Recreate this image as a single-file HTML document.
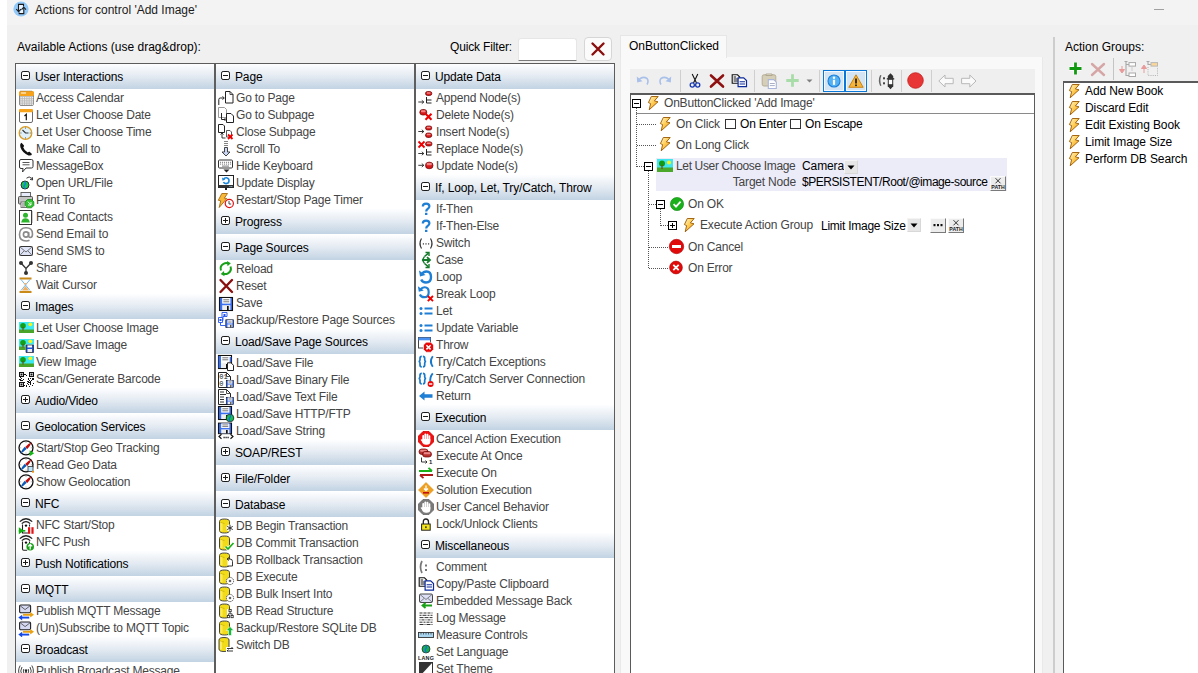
<!DOCTYPE html>
<html><head><meta charset="utf-8"><style>
html,body{margin:0;padding:0}
body{width:1198px;height:673px;overflow:hidden;position:relative;background:#f0f0f0;font-family:"Liberation Sans",sans-serif;font-size:12px;color:#000}
div,svg,span{position:absolute;box-sizing:border-box}
.t{white-space:nowrap;line-height:17px}
.ic{overflow:visible}
#list{left:15px;top:63px;width:600px;height:640px;border:1px solid #5c5c5c;background:#fff}
.colsep{top:64px;width:2px;height:620px;background:#5e5e5e}
.hdr{width:198px;height:25px;background:linear-gradient(#fdfeff 0%,#e6ecf3 45%,#c2d3e3 100%)}
.htxt{white-space:nowrap;line-height:17px;color:#000;letter-spacing:-0.15px}
.itxt{white-space:nowrap;line-height:17px;color:#454545;letter-spacing:-0.2px}
.sep{width:1px;background:#c8c8c8}
</style></head>
<body>

<div style="left:0;top:0;width:7px;height:673px;background:#fff"></div>
<div style="left:7px;top:0;width:1191px;height:25px;background:#f3f3f3"></div>
<svg class="ic" style="left:13px;top:1px" width="16" height="16" viewBox="0 0 16 16"><circle cx="8" cy="8" r="7.6" fill="#92c9f9"/><path d="M5.5 11V3.4h5v2.2M10.8 6.4v6.2H6.2V11.5" fill="#e8f4ff" stroke="#1a1a1a" stroke-width="1.1"/><path d="M3.3 8.2L5.6 10.6L7.9 8.2M8.6 8.6L10.8 6.2L13 8.6" fill="none" stroke="#1a1a1a" stroke-width="1.1"/></svg>
<div class="t" style="left:35px;top:2px;color:#1b1b1b">Actions for control 'Add Image'</div>
<div style="left:1154px;top:9px;width:10px;height:1px;background:#a0a0a0"></div>
<div class="t" style="left:17px;top:39px;color:#000">Available Actions (use drag&amp;drop):</div>
<div class="t" style="left:450px;top:39px;color:#000;letter-spacing:-0.15px">Quick Filter:</div>
<div style="left:518px;top:38px;width:59px;height:23px;background:#fff;border:1px solid #e6e6e6;border-bottom:1px solid #7a7a7a;border-radius:3px 3px 0 0"></div>
<div style="left:584px;top:37px;width:28px;height:24px;background:#fbfbfb;border:1px solid #d6d6d6;border-radius:4px"></div>
<svg class="ic" style="left:590px;top:41px" width="16" height="16" viewBox="0 0 16 16"><path d="M2.5 2.5L13.5 13.5M13.5 2.5L2.5 13.5" stroke="#8b0e0e" stroke-width="2.4" stroke-linecap="round"/></svg>

<div id="list"></div>
<div class="colsep" style="left:214px"></div>
<div class="colsep" style="left:414px"></div>
<div class="hdr" style="left:16px;top:64px"></div>
<svg class="ic" style="left:21px;top:71px" width="9" height="9" viewBox="0 0 9 9"><rect x="0.5" y="0.5" width="8" height="8" rx="1.6" fill="#fff" stroke="#1a1a1a"/><path d="M2 4.5h5" stroke="#1a1a1a"/></svg>
<div class="htxt" style="left:35px;top:69px">User Interactions</div>
<svg class="ic" style="left:18px;top:90px" width="16" height="16" viewBox="0 0 16 16"><rect x="1.5" y="1.5" width="14" height="14" rx="1.5" fill="#bdbdbd" stroke="#8a8a8a"/><rect x="1" y="1" width="15" height="5" rx="1.5" fill="#f7a21b"/><rect x="3" y="2.5" width="5" height="1" fill="#fff"/><rect x="2.5" y="7.0" width="1.2" height="1.2" fill="#f2f2f2"/><rect x="2.5" y="9.2" width="1.2" height="1.2" fill="#f2f2f2"/><rect x="2.5" y="11.4" width="1.2" height="1.2" fill="#f2f2f2"/><rect x="2.5" y="13.6" width="1.2" height="1.2" fill="#f2f2f2"/><rect x="4.8" y="7.0" width="1.2" height="1.2" fill="#f2f2f2"/><rect x="4.8" y="9.2" width="1.2" height="1.2" fill="#f2f2f2"/><rect x="4.8" y="11.4" width="1.2" height="1.2" fill="#f2f2f2"/><rect x="4.8" y="13.6" width="1.2" height="1.2" fill="#f2f2f2"/><rect x="7.1" y="7.0" width="1.2" height="1.2" fill="#f2f2f2"/><rect x="7.1" y="9.2" width="1.2" height="1.2" fill="#f2f2f2"/><rect x="7.1" y="11.4" width="1.2" height="1.2" fill="#f2f2f2"/><rect x="7.1" y="13.6" width="1.2" height="1.2" fill="#f2f2f2"/><rect x="9.4" y="7.0" width="1.2" height="1.2" fill="#f2f2f2"/><rect x="9.4" y="9.2" width="1.2" height="1.2" fill="#f2f2f2"/><rect x="9.4" y="11.4" width="1.2" height="1.2" fill="#f2f2f2"/><rect x="9.4" y="13.6" width="1.2" height="1.2" fill="#f2f2f2"/><rect x="11.7" y="7.0" width="1.2" height="1.2" fill="#f2f2f2"/><rect x="11.7" y="9.2" width="1.2" height="1.2" fill="#f2f2f2"/><rect x="11.7" y="11.4" width="1.2" height="1.2" fill="#f2f2f2"/><rect x="11.7" y="13.6" width="1.2" height="1.2" fill="#f2f2f2"/><rect x="14.0" y="7.0" width="1.2" height="1.2" fill="#f2f2f2"/><rect x="14.0" y="9.2" width="1.2" height="1.2" fill="#f2f2f2"/><rect x="14.0" y="11.4" width="1.2" height="1.2" fill="#f2f2f2"/><rect x="14.0" y="13.6" width="1.2" height="1.2" fill="#f2f2f2"/><path d="M3 0.5v1M5 0.5v1M7 0.5v1M9 0.5v1M11 0.5v1M13 0.5v1" stroke="#666" stroke-width="0.8"/></svg>
<div class="itxt" style="left:36px;top:90px">Access Calendar</div>
<svg class="ic" style="left:18px;top:107px" width="16" height="16" viewBox="0 0 16 16"><rect x="1.5" y="2.5" width="13" height="13" rx="1.5" fill="#fff" stroke="#6a6a6a"/><rect x="1" y="2" width="14" height="3.3" rx="1.2" fill="#f7a21b"/><path d="M6.5 9L8.3 7.4V13.2" fill="none" stroke="#111" stroke-width="1.2"/></svg>
<div class="itxt" style="left:36px;top:107px">Let User Choose Date</div>
<svg class="ic" style="left:18px;top:124px" width="16" height="16" viewBox="0 0 16 16"><circle cx="7.5" cy="9" r="6.3" fill="#def1fb" stroke="#d99a20" stroke-width="1.3"/><path d="M4.5 6L7.5 9H10.5" fill="none" stroke="#333" stroke-width="1.1"/><path d="M7.5 3.5v1.2M7.5 13.3v1.2M2.3 9h1.2M11.7 9h1.2" stroke="#555" stroke-width="0.8"/></svg>
<div class="itxt" style="left:36px;top:124px">Let User Choose Time</div>
<svg class="ic" style="left:18px;top:141px" width="16" height="16" viewBox="0 0 16 16"><path d="M3.5 1.8 Q1.5 3 2.5 6.5 Q4.5 12 10.5 14.5 Q13.5 15 14 13 L11.5 10.8 Q10.5 10.5 9.8 11.5 Q6.5 10 5.2 6.2 Q6.2 5.5 6 4.5 Z" fill="#111"/></svg>
<div class="itxt" style="left:36px;top:141px">Make Call to</div>
<svg class="ic" style="left:18px;top:158px" width="16" height="16" viewBox="0 0 16 16"><path d="M3 1.5h10.5q1.5 0 1.5 1.5v5.5q0 1.5-1.5 1.5H8L4.5 14l0.6-3.5H3q-1.5 0-1.5-1.5V3q0-1.5 1.5-1.5Z" fill="#fff" stroke="#333" stroke-width="1"/><path d="M4.5 4.5h7M4.5 6.8h7" stroke="#444" stroke-width="0.9"/></svg>
<div class="itxt" style="left:36px;top:158px">MessageBox</div>
<svg class="ic" style="left:18px;top:175px" width="16" height="16" viewBox="0 0 16 16"><circle cx="7" cy="10" r="4" fill="#18c850" stroke="#222" stroke-width="0.9"/><path d="M6.5 6.8 Q8.5 8.5 6.5 10 Q5 11.5 7.5 13.5" fill="none" stroke="#1a7ee0" stroke-width="1.6"/><path d="M8.5 3.2 Q11 0.5 14 3.5" fill="none" stroke="#222" stroke-width="0.9"/><path d="M12 4.3L14.6 5L14.4 2.2" fill="none" stroke="#222" stroke-width="0.9"/></svg>
<div class="itxt" style="left:36px;top:175px">Open URL/File</div>
<svg class="ic" style="left:18px;top:192px" width="16" height="16" viewBox="0 0 16 16"><rect x="3" y="0.5" width="9.5" height="5" fill="#e6ecfa" stroke="#555" stroke-width="0.9"/><rect x="0.5" y="4.5" width="14" height="7.5" rx="1" fill="#c4c4c4" stroke="#444" stroke-width="0.9"/><rect x="3" y="10" width="6" height="5.5" fill="#fff" stroke="#555" stroke-width="0.8"/><path d="M4 12h3M4 14h3" stroke="#444" stroke-width="0.8"/><path d="M9.5 7.5h4l2.3 2.3v3.7l-2.3 2.3h-4l-2.3-2.3V9.8Z" fill="#30c030" stroke="#168a16" stroke-width="0.8"/><path d="M9.8 9.5L13 13M10 13h3V10" fill="none" stroke="#fff" stroke-width="0.9"/></svg>
<div class="itxt" style="left:36px;top:192px">Print To</div>
<svg class="ic" style="left:18px;top:209px" width="16" height="16" viewBox="0 0 16 16"><rect x="1.5" y="1.5" width="12" height="14" fill="#fff" stroke="#333" stroke-width="1"/><path d="M14 2.5v12" stroke="#555" stroke-width="1.2" stroke-dasharray="1 1"/><circle cx="7.5" cy="6.3" r="2.5" fill="#2eb52e"/><path d="M3.2 13.5 Q3.8 9.2 7.5 9.2 Q11.2 9.2 11.8 13.5Z" fill="#2eb52e"/></svg>
<div class="itxt" style="left:36px;top:209px">Read Contacts</div>
<svg class="ic" style="left:18px;top:226px" width="16" height="16" viewBox="0 0 16 16"><circle cx="8" cy="8.5" r="2.6" fill="none" stroke="#8a8a8a" stroke-width="1.6"/><path d="M10.6 6v3.5q0 2 1.7 2 2.2 0 2.2-3.5 0-6.2-6.5-6.2T1.5 8.5q0 6.5 6.7 6.5 2 0 3.3-0.7" fill="none" stroke="#8a8a8a" stroke-width="1.6"/></svg>
<div class="itxt" style="left:36px;top:226px">Send Email to</div>
<svg class="ic" style="left:18px;top:243px" width="16" height="16" viewBox="0 0 16 16"><rect x="1.5" y="3.5" width="13" height="9" rx="1" fill="#dfe4f7" stroke="#333"/><path d="M2 4L8 9L14 4M2 12.2L6 8M14 12.2L10 8" fill="none" stroke="#555" stroke-width="0.8"/></svg>
<div class="itxt" style="left:36px;top:243px">Send SMS to</div>
<svg class="ic" style="left:18px;top:260px" width="16" height="16" viewBox="0 0 16 16"><circle cx="3" cy="3" r="2" fill="#333"/><circle cx="13" cy="3" r="2" fill="#333"/><circle cx="8" cy="13" r="2" fill="#333"/><path d="M3 3L8 8.5L13 3M8 8.5V13" fill="none" stroke="#333" stroke-width="1.3"/></svg>
<div class="itxt" style="left:36px;top:260px">Share</div>
<svg class="ic" style="left:18px;top:277px" width="16" height="16" viewBox="0 0 16 16"><rect x="1.5" y="0.5" width="12" height="2" fill="#c98a1a"/><rect x="1.5" y="14" width="12" height="2" fill="#c98a1a"/><path d="M3 2.5L12 13.5M12 2.5L3 13.5" stroke="#4aa8ea" stroke-width="0.8"/><path d="M5.5 5.5Q7.5 7 9.5 5.5L7.5 8.2Z M7.5 9L11 13.5H4Z" fill="#f0b060"/></svg>
<div class="itxt" style="left:36px;top:277px">Wait Cursor</div>
<div class="hdr" style="left:16px;top:294px"></div>
<svg class="ic" style="left:21px;top:301px" width="9" height="9" viewBox="0 0 9 9"><rect x="0.5" y="0.5" width="8" height="8" rx="1.6" fill="#fff" stroke="#1a1a1a"/><path d="M2 4.5h5" stroke="#1a1a1a"/></svg>
<div class="htxt" style="left:35px;top:299px">Images</div>
<svg class="ic" style="left:18px;top:320px" width="16" height="16" viewBox="0 0 16 16"><rect x="1" y="2" width="15" height="11" fill="#3ce8f2"/><rect x="1" y="9.5" width="15" height="3.5" fill="#49a52a"/><circle cx="5" cy="5.8" r="2.8" fill="#14a014"/><rect x="4.5" y="7" width="1" height="3.5" fill="#6a4010"/><circle cx="12.3" cy="4.3" r="1.9" fill="#f5f51a"/></svg>
<div class="itxt" style="left:36px;top:320px">Let User Choose Image</div>
<svg class="ic" style="left:18px;top:337px" width="16" height="16" viewBox="0 0 16 16"><rect x="1" y="2" width="15" height="11" fill="#3ce8f2"/><rect x="1" y="9.5" width="15" height="3.5" fill="#49a52a"/><circle cx="5" cy="5.8" r="2.8" fill="#14a014"/><rect x="4.5" y="7" width="1" height="3.5" fill="#6a4010"/><circle cx="12.3" cy="4.3" r="1.9" fill="#f5f51a"/><rect x="7.5" y="7.5" width="8" height="8.5" fill="#fff"/><rect x="8" y="8" width="7.5" height="7.5" fill="#1d4fd8"/><rect x="9.5" y="8" width="4.5" height="2.5" fill="#fff"/><rect x="9.5" y="12" width="4.5" height="3.5" fill="#eee"/><path d="M8 8h7.5v7.5H8z" fill="none" stroke="#222" stroke-width="0.7"/></svg>
<div class="itxt" style="left:36px;top:337px">Load/Save Image</div>
<svg class="ic" style="left:18px;top:354px" width="16" height="16" viewBox="0 0 16 16"><rect x="1" y="2" width="15" height="11" fill="#3ce8f2"/><rect x="1" y="9.5" width="15" height="3.5" fill="#49a52a"/><circle cx="5" cy="5.8" r="2.8" fill="#14a014"/><rect x="4.5" y="7" width="1" height="3.5" fill="#6a4010"/><circle cx="12.3" cy="4.3" r="1.9" fill="#f5f51a"/></svg>
<div class="itxt" style="left:36px;top:354px">View Image</div>
<svg class="ic" style="left:18px;top:371px" width="16" height="16" viewBox="0 0 16 16"><rect x="1" y="1" width="15" height="15" fill="#fff"/><rect x="1.5" y="1.5" width="4" height="4" fill="none" stroke="#111"/><rect x="2.5" y="2.5" width="2" height="2" fill="#111"/><rect x="11.5" y="1.5" width="4" height="4" fill="none" stroke="#111"/><rect x="12.5" y="2.5" width="2" height="2" fill="#111"/><rect x="1.5" y="11.5" width="4" height="4" fill="none" stroke="#111"/><rect x="2.5" y="12.5" width="2" height="2" fill="#111"/><rect x="9" y="10" width="1" height="1" fill="#111"/><rect x="11" y="15" width="1" height="1" fill="#111"/><rect x="15" y="8" width="1" height="1" fill="#111"/><rect x="9" y="12" width="1" height="1" fill="#111"/><rect x="13" y="9" width="1" height="1" fill="#111"/><rect x="14" y="8" width="1" height="1" fill="#111"/><rect x="12" y="11" width="1" height="1" fill="#111"/><rect x="8" y="4" width="1" height="1" fill="#111"/><rect x="8" y="14" width="1" height="1" fill="#111"/><rect x="14" y="7" width="1" height="1" fill="#111"/><rect x="6" y="11" width="1" height="1" fill="#111"/><rect x="7" y="3" width="1" height="1" fill="#111"/><rect x="10" y="13" width="1" height="1" fill="#111"/><rect x="6" y="14" width="1" height="1" fill="#111"/><rect x="10" y="8" width="1" height="1" fill="#111"/><rect x="15" y="12" width="1" height="1" fill="#111"/><rect x="12" y="12" width="1" height="1" fill="#111"/><rect x="12" y="7" width="1" height="1" fill="#111"/><rect x="15" y="8" width="1" height="1" fill="#111"/><rect x="8" y="15" width="1" height="1" fill="#111"/><rect x="6" y="3" width="1" height="1" fill="#111"/><rect x="10" y="11" width="1" height="1" fill="#111"/><rect x="12" y="13" width="1" height="1" fill="#111"/><rect x="10" y="7" width="1" height="1" fill="#111"/><rect x="14" y="14" width="1" height="1" fill="#111"/><rect x="12" y="10" width="1" height="1" fill="#111"/><rect x="11" y="9" width="1" height="1" fill="#111"/><rect x="15" y="7" width="1" height="1" fill="#111"/><rect x="11" y="11" width="1" height="1" fill="#111"/><rect x="6" y="14" width="1" height="1" fill="#111"/><rect x="10" y="10" width="1" height="1" fill="#111"/><rect x="2" y="6" width="1" height="1" fill="#111"/><rect x="3" y="7" width="1" height="1" fill="#111"/><rect x="1" y="8" width="1" height="1" fill="#111"/><rect x="2" y="8" width="1" height="1" fill="#111"/><rect x="5" y="8" width="1" height="1" fill="#111"/><rect x="2" y="9" width="1" height="1" fill="#111"/><rect x="3" y="9" width="1" height="1" fill="#111"/><rect x="4" y="9" width="1" height="1" fill="#111"/></svg>
<div class="itxt" style="left:36px;top:371px">Scan/Generate Barcode</div>
<div class="hdr" style="left:16px;top:388px"></div>
<svg class="ic" style="left:21px;top:395px" width="9" height="9" viewBox="0 0 9 9"><rect x="0.5" y="0.5" width="8" height="8" rx="1.6" fill="#fff" stroke="#1a1a1a"/><path d="M2 4.5h5M4.5 2v5" stroke="#1a1a1a"/></svg>
<div class="htxt" style="left:35px;top:393px">Audio/Video</div>
<div class="hdr" style="left:16px;top:414px"></div>
<svg class="ic" style="left:21px;top:421px" width="9" height="9" viewBox="0 0 9 9"><rect x="0.5" y="0.5" width="8" height="8" rx="1.6" fill="#fff" stroke="#1a1a1a"/><path d="M2 4.5h5" stroke="#1a1a1a"/></svg>
<div class="htxt" style="left:35px;top:419px">Geolocation Services</div>
<svg class="ic" style="left:18px;top:440px" width="16" height="16" viewBox="0 0 16 16"><circle cx="8" cy="7.8" r="7" fill="#fff" stroke="#111" stroke-width="1.3"/><path d="M8 2v1M8 12.6v1M2.2 7.8h1M12.8 7.8h1" stroke="#888" stroke-width="0.7"/><path d="M13.6 2.2Q12.5 5.5 9.3 8.9L7.2 6.9Q10.5 3.5 13.6 2.2Z" fill="#c00d0d"/><path d="M2.4 13.4Q3.5 10.1 6.7 6.7L8.8 8.7Q5.5 12.1 2.4 13.4Z" fill="#0d5bb8"/><path d="M11.6 10.2v6l4.5-3z" fill="#14b414"/></svg>
<div class="itxt" style="left:36px;top:440px">Start/Stop Geo Tracking</div>
<svg class="ic" style="left:18px;top:457px" width="16" height="16" viewBox="0 0 16 16"><circle cx="8" cy="7.8" r="7" fill="#fff" stroke="#111" stroke-width="1.3"/><path d="M8 2v1M8 12.6v1M2.2 7.8h1M12.8 7.8h1" stroke="#888" stroke-width="0.7"/><path d="M13.6 2.2Q12.5 5.5 9.3 8.9L7.2 6.9Q10.5 3.5 13.6 2.2Z" fill="#c00d0d"/><path d="M2.4 13.4Q3.5 10.1 6.7 6.7L8.8 8.7Q5.5 12.1 2.4 13.4Z" fill="#0d5bb8"/><rect x="10" y="9.5" width="5" height="5" fill="#bfe6ff" stroke="#333" stroke-width="0.8"/><circle cx="15" cy="14.8" r="1.1" fill="#f09010"/></svg>
<div class="itxt" style="left:36px;top:457px">Read Geo Data</div>
<svg class="ic" style="left:18px;top:474px" width="16" height="16" viewBox="0 0 16 16"><circle cx="8" cy="7.8" r="7" fill="#fff" stroke="#111" stroke-width="1.3"/><path d="M8 2v1M8 12.6v1M2.2 7.8h1M12.8 7.8h1" stroke="#888" stroke-width="0.7"/><path d="M13.6 2.2Q12.5 5.5 9.3 8.9L7.2 6.9Q10.5 3.5 13.6 2.2Z" fill="#c00d0d"/><path d="M2.4 13.4Q3.5 10.1 6.7 6.7L8.8 8.7Q5.5 12.1 2.4 13.4Z" fill="#0d5bb8"/></svg>
<div class="itxt" style="left:36px;top:474px">Show Geolocation</div>
<div class="hdr" style="left:16px;top:491px"></div>
<svg class="ic" style="left:21px;top:498px" width="9" height="9" viewBox="0 0 9 9"><rect x="0.5" y="0.5" width="8" height="8" rx="1.6" fill="#fff" stroke="#1a1a1a"/><path d="M2 4.5h5" stroke="#1a1a1a"/></svg>
<div class="htxt" style="left:35px;top:496px">NFC</div>
<svg class="ic" style="left:18px;top:517px" width="16" height="16" viewBox="0 0 16 16"><path d="M1.8 4.6Q8 -1.2 14.2 4.6M3.8 6.6Q8 2.6 12.2 6.6" fill="none" stroke="#222" stroke-width="1.3"/><circle cx="8" cy="8.6" r="1.2" fill="#111"/><path d="M4.5 7.5v8.5h5.5M11.5 7.5v2" fill="none" stroke="#222" stroke-width="1.1"/><path d="M0.8 10.2v7l5.2-3.5z" fill="#12b012"/><rect x="0.8" y="13" width="6.5" height="1.6" fill="#12b012"/><rect x="10" y="10.2" width="2.2" height="6.6" fill="#e41414"/><rect x="13.4" y="10.2" width="2.2" height="6.6" fill="#e41414"/></svg>
<div class="itxt" style="left:36px;top:517px">NFC Start/Stop</div>
<svg class="ic" style="left:18px;top:534px" width="16" height="16" viewBox="0 0 16 16"><path d="M1.8 4.6Q8 -1.2 14.2 4.6M3.8 6.6Q8 2.6 12.2 6.6" fill="none" stroke="#222" stroke-width="1.3"/><circle cx="8" cy="8.6" r="1.2" fill="#111"/><path d="M4.5 7.5v7.5q0 1.2 1.2 1.2h3.5M11.5 7.5v2" fill="none" stroke="#222" stroke-width="1.1"/><circle cx="12.2" cy="12.8" r="3.8" fill="#18a018"/><path d="M12.2 15.6V10.4M10.2 12.4L12.2 10.4L14.2 12.4" fill="none" stroke="#fff" stroke-width="1.3"/></svg>
<div class="itxt" style="left:36px;top:534px">NFC Push</div>
<div class="hdr" style="left:16px;top:551px"></div>
<svg class="ic" style="left:21px;top:558px" width="9" height="9" viewBox="0 0 9 9"><rect x="0.5" y="0.5" width="8" height="8" rx="1.6" fill="#fff" stroke="#1a1a1a"/><path d="M2 4.5h5M4.5 2v5" stroke="#1a1a1a"/></svg>
<div class="htxt" style="left:35px;top:556px">Push Notifications</div>
<div class="hdr" style="left:16px;top:577px"></div>
<svg class="ic" style="left:21px;top:584px" width="9" height="9" viewBox="0 0 9 9"><rect x="0.5" y="0.5" width="8" height="8" rx="1.6" fill="#fff" stroke="#1a1a1a"/><path d="M2 4.5h5" stroke="#1a1a1a"/></svg>
<div class="htxt" style="left:35px;top:582px">MQTT</div>
<svg class="ic" style="left:18px;top:603px" width="16" height="16" viewBox="0 0 16 16"><rect x="1.6" y="2" width="11" height="7.8" rx="1.2" fill="#d5d9f2" stroke="#222" stroke-width="1.1"/><path d="M2.2 2.8L7.1 6.6L12 2.8" fill="none" stroke="#444" stroke-width="0.8"/><path d="M5 11.8h8.5" stroke="#e8a010" stroke-width="1.9"/><path d="M12.2 9L16 11.8L12.2 14.6Z" fill="#e8a010"/><path d="M11.2 14.6H3.5" stroke="#1448e8" stroke-width="1.9"/><path d="M4.2 11.8L0.3 14.6L4.2 17.4Z" fill="#1448e8"/></svg>
<div class="itxt" style="left:36px;top:603px">Publish MQTT Message</div>
<svg class="ic" style="left:18px;top:620px" width="16" height="16" viewBox="0 0 16 16"><rect x="1.6" y="2" width="11" height="7.8" rx="1.2" fill="#d5d9f2" stroke="#222" stroke-width="1.1"/><path d="M2.2 2.8L7.1 6.6L12 2.8" fill="none" stroke="#444" stroke-width="0.8"/><path d="M5 11.8h8.5" stroke="#e8a010" stroke-width="1.9"/><path d="M12.2 9L16 11.8L12.2 14.6Z" fill="#e8a010"/><path d="M11.2 14.6H3.5" stroke="#1448e8" stroke-width="1.9"/><path d="M4.2 11.8L0.3 14.6L4.2 17.4Z" fill="#1448e8"/></svg>
<div class="itxt" style="left:36px;top:620px">(Un)Subscribe to MQTT Topic</div>
<div class="hdr" style="left:16px;top:637px"></div>
<svg class="ic" style="left:21px;top:644px" width="9" height="9" viewBox="0 0 9 9"><rect x="0.5" y="0.5" width="8" height="8" rx="1.6" fill="#fff" stroke="#1a1a1a"/><path d="M2 4.5h5" stroke="#1a1a1a"/></svg>
<div class="htxt" style="left:35px;top:642px">Broadcast</div>
<svg class="ic" style="left:18px;top:663px" width="16" height="16" viewBox="0 0 16 16"><path d="M4 4 Q1.5 8 4 12M12 4 Q14.5 8 12 12M2.2 2.5 Q-1 8 2.2 13.5M13.8 2.5 Q17 8 13.8 13.5M5.8 6 Q4.8 8 5.8 10M10.2 6 Q11.2 8 10.2 10" fill="none" stroke="#333" stroke-width="0.9"/><circle cx="8" cy="7.5" r="1.2" fill="#222"/><path d="M8 8v6M6.5 14h3" stroke="#222" stroke-width="1.3"/></svg>
<div class="itxt" style="left:36px;top:663px">Publish Broadcast Message</div>
<div class="hdr" style="left:216px;top:64px"></div>
<svg class="ic" style="left:221px;top:71px" width="9" height="9" viewBox="0 0 9 9"><rect x="0.5" y="0.5" width="8" height="8" rx="1.6" fill="#fff" stroke="#1a1a1a"/><path d="M2 4.5h5" stroke="#1a1a1a"/></svg>
<div class="htxt" style="left:235px;top:69px">Page</div>
<svg class="ic" style="left:218px;top:90px" width="16" height="16" viewBox="0 0 16 16"><path d="M7.5 1.5h4.5l3 3v8.5h-7.5z" fill="#fff" stroke="#222" stroke-width="1"/><path d="M12 1.5v3h3" fill="none" stroke="#222" stroke-width="0.8"/><path d="M0.8 15V9.5q0-1.5 1.5-1.5H5" fill="none" stroke="#222" stroke-width="1"/><path d="M4.5 6.5L6.3 8L4.5 9.5" fill="none" stroke="#222" stroke-width="1"/></svg>
<div class="itxt" style="left:236px;top:90px">Go to Page</div>
<svg class="ic" style="left:218px;top:107px" width="16" height="16" viewBox="0 0 16 16"><path d="M0.5 0.5h6l2 2v8h-8z" fill="#fff" stroke="#9a9a9a" stroke-width="1"/><path d="M8.5 6.5h4.5l2.5 2.5v6.5h-7z" fill="#fff" stroke="#222" stroke-width="1"/><path d="M3.5 6v6.5h4" fill="none" stroke="#222" stroke-width="1"/><path d="M6.5 11L8 12.5L6.5 14" fill="none" stroke="#222" stroke-width="0.9"/></svg>
<div class="itxt" style="left:236px;top:107px">Go to Subpage</div>
<svg class="ic" style="left:218px;top:124px" width="16" height="16" viewBox="0 0 16 16"><path d="M0.5 0.5h4.5l1.5 1.5v6.5h-6z" fill="#fff" stroke="#222" stroke-width="1"/><path d="M8.5 6.5h3.5l1.5 1.5v5h-5z" fill="#fff" stroke="#444" stroke-width="0.9"/><path d="M4 9v5h3.5M2.5 10.5L4 9L5.5 10.5" fill="none" stroke="#222" stroke-width="0.9"/><path d="M10 10.5L14.5 15M14.5 10.5L10 15" stroke="#e00" stroke-width="1.8"/></svg>
<div class="itxt" style="left:236px;top:124px">Close Subpage</div>
<svg class="ic" style="left:218px;top:141px" width="16" height="16" viewBox="0 0 16 16"><path d="M6 0.5h4M6 2.5h4M6 4.5h4" stroke="#666" stroke-width="0.8"/><path d="M6.5 6.5h3v4.5h2.5L8 15L4 11h2.5z" fill="#c9d6f5" stroke="#333" stroke-width="0.9"/></svg>
<div class="itxt" style="left:236px;top:141px">Scroll To</div>
<svg class="ic" style="left:218px;top:158px" width="16" height="16" viewBox="0 0 16 16"><rect x="0.5" y="2" width="14" height="8" rx="1" fill="#fff" stroke="#333" stroke-width="1"/><rect x="2" y="3.8" width="1.1" height="1" fill="#777"/><rect x="2" y="5.6" width="1.1" height="1" fill="#777"/><rect x="4" y="3.8" width="1.1" height="1" fill="#777"/><rect x="4" y="5.6" width="1.1" height="1" fill="#777"/><rect x="6" y="3.8" width="1.1" height="1" fill="#777"/><rect x="6" y="5.6" width="1.1" height="1" fill="#777"/><rect x="8" y="3.8" width="1.1" height="1" fill="#777"/><rect x="8" y="5.6" width="1.1" height="1" fill="#777"/><rect x="10" y="3.8" width="1.1" height="1" fill="#777"/><rect x="10" y="5.6" width="1.1" height="1" fill="#777"/><rect x="12" y="3.8" width="1.1" height="1" fill="#777"/><rect x="12" y="5.6" width="1.1" height="1" fill="#777"/><rect x="4" y="7.6" width="7" height="1" fill="#777"/><path d="M5.5 11.5h6L8.5 14.5Z" fill="#222"/></svg>
<div class="itxt" style="left:236px;top:158px">Hide Keyboard</div>
<svg class="ic" style="left:218px;top:175px" width="16" height="16" viewBox="0 0 16 16"><rect x="0.5" y="0.5" width="15" height="12" fill="#fff" stroke="#222" stroke-width="1"/><rect x="0.5" y="10" width="15" height="2.8" fill="#333"/><rect x="11.5" y="11" width="1" height="1" fill="#9cd"/><rect x="13.3" y="11" width="1" height="1" fill="#9cd"/><rect x="7" y="12.5" width="2" height="2.5" fill="#222"/><path d="M5.5 4.5 Q6.5 2.5 8.5 2.7 Q11 3 11 5.8 Q11 8.5 8 8.6 Q6 8.6 5.5 7" fill="none" stroke="#1d86d8" stroke-width="1.6"/><path d="M4 2.5L4.5 5.8L7.3 4.6Z" fill="#1d86d8"/></svg>
<div class="itxt" style="left:236px;top:175px">Update Display</div>
<svg class="ic" style="left:218px;top:192px" width="16" height="16" viewBox="0 0 16 16"><g transform="translate(0,1)"><path d="M3.8 0.5L9.5 0.5L6.3 5.2L8.8 5.5L1.2 14.5L2.7 7.8L0.3 7.3Z" fill="#f8b93a" stroke="#9a5a00" stroke-width="0.8" stroke-linejoin="round"/></g><circle cx="11.3" cy="11.5" r="4.1" fill="#fff" stroke="#e01010" stroke-width="1.2"/><path d="M11 9v3h2.2" fill="none" stroke="#333" stroke-width="0.9"/></svg>
<div class="itxt" style="left:236px;top:192px">Restart/Stop Page Timer</div>
<div class="hdr" style="left:216px;top:209px"></div>
<svg class="ic" style="left:221px;top:216px" width="9" height="9" viewBox="0 0 9 9"><rect x="0.5" y="0.5" width="8" height="8" rx="1.6" fill="#fff" stroke="#1a1a1a"/><path d="M2 4.5h5M4.5 2v5" stroke="#1a1a1a"/></svg>
<div class="htxt" style="left:235px;top:214px">Progress</div>
<div class="hdr" style="left:216px;top:235px"></div>
<svg class="ic" style="left:221px;top:242px" width="9" height="9" viewBox="0 0 9 9"><rect x="0.5" y="0.5" width="8" height="8" rx="1.6" fill="#fff" stroke="#1a1a1a"/><path d="M2 4.5h5" stroke="#1a1a1a"/></svg>
<div class="htxt" style="left:235px;top:240px">Page Sources</div>
<svg class="ic" style="left:218px;top:261px" width="16" height="16" viewBox="0 0 16 16"><path d="M3 9.5 Q1.5 5 5.5 2.8 Q8 1.5 10.5 2.5" fill="none" stroke="#18a018" stroke-width="2"/><path d="M9 0L12.8 2.2L9.5 5.2Z" fill="#18a018"/><path d="M12.5 5.5 Q14 10 10 12.3 Q7.5 13.7 5 12.7" fill="none" stroke="#18a018" stroke-width="2"/><path d="M6.5 15.2L2.7 13L6 10Z" fill="#18a018"/></svg>
<div class="itxt" style="left:236px;top:261px">Reload</div>
<svg class="ic" style="left:218px;top:278px" width="16" height="16" viewBox="0 0 16 16"><path d="M2.5 2L14 14M14 2L2.5 14" stroke="#8a1010" stroke-width="2.4" stroke-linecap="round"/></svg>
<div class="itxt" style="left:236px;top:278px">Reset</div>
<svg class="ic" style="left:218px;top:295px" width="16" height="16" viewBox="0 0 16 16"><rect x="1.5" y="2.5" width="13" height="13" fill="#3a6ff0" stroke="#111" stroke-width="1.1"/><rect x="4.2" y="3" width="8.2" height="5.6" fill="#fff"/><path d="M5.3 4.8h6M5.3 6.8h6" stroke="#666" stroke-width="0.9"/><rect x="4.2" y="10.2" width="8.2" height="4.8" fill="#eeeeee"/><rect x="9" y="11" width="1.7" height="4.2" fill="#111"/></svg>
<div class="itxt" style="left:236px;top:295px">Save</div>
<svg class="ic" style="left:218px;top:312px" width="16" height="16" viewBox="0 0 16 16"><path d="M4 0.5h5v4h-4v4h-3v-3h2z" fill="#fff" stroke="#2255ee" stroke-width="0.9"/><rect x="5.5" y="2" width="2" height="2" fill="#2255ee"/><path d="M0.5 5.5h4v5h-4zM2.5 10.5v3h5" fill="#fff" stroke="#2255ee" stroke-width="0.9"/><rect x="1.5" y="7" width="2" height="2" fill="#2255ee"/><g transform="translate(7.5,7.5) scale(0.6) translate(-1,-2)"><rect x="1.5" y="2.5" width="13" height="13" fill="#3a6ff0" stroke="#111" stroke-width="1.1"/><rect x="4.2" y="3" width="8.2" height="5.6" fill="#fff"/><path d="M5.3 4.8h6M5.3 6.8h6" stroke="#666" stroke-width="0.9"/><rect x="4.2" y="10.2" width="8.2" height="4.8" fill="#eeeeee"/><rect x="9" y="11" width="1.7" height="4.2" fill="#111"/></g></svg>
<div class="itxt" style="left:236px;top:312px">Backup/Restore Page Sources</div>
<div class="hdr" style="left:216px;top:329px"></div>
<svg class="ic" style="left:221px;top:336px" width="9" height="9" viewBox="0 0 9 9"><rect x="0.5" y="0.5" width="8" height="8" rx="1.6" fill="#fff" stroke="#1a1a1a"/><path d="M2 4.5h5" stroke="#1a1a1a"/></svg>
<div class="htxt" style="left:235px;top:334px">Load/Save Page Sources</div>
<svg class="ic" style="left:218px;top:355px" width="16" height="16" viewBox="0 0 16 16"><g transform="translate(-1,-2)"><rect x="1.5" y="2.5" width="13" height="13" fill="#fff" stroke="#111" stroke-width="1.1"/><rect x="1.6" y="3" width="2.4" height="12" fill="#3a6ff0"/><rect x="12.5" y="4" width="1.8" height="5" fill="#3a6ff0"/><rect x="4.2" y="3" width="8.2" height="5.6" fill="#fff"/><path d="M5.3 4.8h6M5.3 6.8h6" stroke="#666" stroke-width="0.9"/><rect x="4.2" y="10.2" width="8.2" height="4.8" fill="#eeeeee"/><rect x="9" y="11" width="1.7" height="4.2" fill="#111"/></g><path d="M9.5 7.8h3.5l2.5 2.5v5.2h-6z" fill="#fff" stroke="#222" stroke-width="1"/></svg>
<div class="itxt" style="left:236px;top:355px">Load/Save File</div>
<svg class="ic" style="left:218px;top:372px" width="16" height="16" viewBox="0 0 16 16"><path d="M0.5 0.5h8l4 4v11h-12z" fill="#fff" stroke="#222" stroke-width="1"/><path d="M8.5 0.5v4h4" fill="none" stroke="#222" stroke-width="0.8"/><text x="1.2" y="7" font-size="7" font-family="Liberation Mono" fill="#222">01</text><text x="1.2" y="14" font-size="7" font-family="Liberation Mono" fill="#222">0</text><g transform="translate(8,8) scale(0.55) translate(-1,-2)"><rect x="1.5" y="2.5" width="13" height="13" fill="#3a6ff0" stroke="#111" stroke-width="1.1"/><rect x="4.2" y="3" width="8.2" height="5.6" fill="#fff"/><path d="M5.3 4.8h6M5.3 6.8h6" stroke="#666" stroke-width="0.9"/><rect x="4.2" y="10.2" width="8.2" height="4.8" fill="#eeeeee"/><rect x="9" y="11" width="1.7" height="4.2" fill="#111"/></g></svg>
<div class="itxt" style="left:236px;top:372px">Load/Save Binary File</div>
<svg class="ic" style="left:218px;top:389px" width="16" height="16" viewBox="0 0 16 16"><path d="M0.5 0.5h8l4 4v11h-12z" fill="#fff" stroke="#222" stroke-width="1"/><path d="M8.5 0.5v4h4" fill="none" stroke="#222" stroke-width="0.8"/><path d="M2 3h4M2 5.5h6M2 8h4M2 10.5h4M2 13h4" stroke="#333" stroke-width="1"/><g transform="translate(8,8) scale(0.55) translate(-1,-2)"><rect x="1.5" y="2.5" width="13" height="13" fill="#3a6ff0" stroke="#111" stroke-width="1.1"/><rect x="4.2" y="3" width="8.2" height="5.6" fill="#fff"/><path d="M5.3 4.8h6M5.3 6.8h6" stroke="#666" stroke-width="0.9"/><rect x="4.2" y="10.2" width="8.2" height="4.8" fill="#eeeeee"/><rect x="9" y="11" width="1.7" height="4.2" fill="#111"/></g></svg>
<div class="itxt" style="left:236px;top:389px">Load/Save Text File</div>
<svg class="ic" style="left:218px;top:406px" width="16" height="16" viewBox="0 0 16 16"><g transform="translate(-1,-2)"><rect x="1.5" y="2.5" width="13" height="13" fill="#3a6ff0" stroke="#111" stroke-width="1.1"/><rect x="4.2" y="3" width="8.2" height="5.6" fill="#fff"/><path d="M5.3 4.8h6M5.3 6.8h6" stroke="#666" stroke-width="0.9"/><rect x="4.2" y="10.2" width="8.2" height="4.8" fill="#eeeeee"/><rect x="9" y="11" width="1.7" height="4.2" fill="#111"/></g><circle cx="12" cy="12" r="3.8" fill="#14c04a" stroke="#222" stroke-width="0.8"/><path d="M11.5 8.5q2 1.5 0 3.5q-1.2 1.3 0.8 3.5" fill="none" stroke="#1a6ee0" stroke-width="1.3"/></svg>
<div class="itxt" style="left:236px;top:406px">Load/Save HTTP/FTP</div>
<svg class="ic" style="left:218px;top:423px" width="16" height="16" viewBox="0 0 16 16"><g transform="translate(-1,-2) scale(1,0.82)"><rect x="1.5" y="2.5" width="13" height="13" fill="#3a6ff0" stroke="#111" stroke-width="1.1"/><rect x="4.2" y="3" width="8.2" height="5.6" fill="#fff"/><path d="M5.3 4.8h6M5.3 6.8h6" stroke="#666" stroke-width="0.9"/><rect x="4.2" y="10.2" width="8.2" height="4.8" fill="#eeeeee"/><rect x="9" y="11" width="1.7" height="4.2" fill="#111"/></g><path d="M3.5 11.2L1 13.5L3.5 15.8M12.5 11.2L15 13.5L12.5 15.8" fill="none" stroke="#111" stroke-width="1.2"/><path d="M5.5 14.5h1.2M7.5 14.5h1.2M9.5 14.5h1.2" stroke="#111" stroke-width="1.4"/></svg>
<div class="itxt" style="left:236px;top:423px">Load/Save String</div>
<div class="hdr" style="left:216px;top:440px"></div>
<svg class="ic" style="left:221px;top:447px" width="9" height="9" viewBox="0 0 9 9"><rect x="0.5" y="0.5" width="8" height="8" rx="1.6" fill="#fff" stroke="#1a1a1a"/><path d="M2 4.5h5M4.5 2v5" stroke="#1a1a1a"/></svg>
<div class="htxt" style="left:235px;top:445px">SOAP/REST</div>
<div class="hdr" style="left:216px;top:466px"></div>
<svg class="ic" style="left:221px;top:473px" width="9" height="9" viewBox="0 0 9 9"><rect x="0.5" y="0.5" width="8" height="8" rx="1.6" fill="#fff" stroke="#1a1a1a"/><path d="M2 4.5h5M4.5 2v5" stroke="#1a1a1a"/></svg>
<div class="htxt" style="left:235px;top:471px">File/Folder</div>
<div class="hdr" style="left:216px;top:492px"></div>
<svg class="ic" style="left:221px;top:499px" width="9" height="9" viewBox="0 0 9 9"><rect x="0.5" y="0.5" width="8" height="8" rx="1.6" fill="#fff" stroke="#1a1a1a"/><path d="M2 4.5h5" stroke="#1a1a1a"/></svg>
<div class="htxt" style="left:235px;top:497px">Database</div>
<svg class="ic" style="left:218px;top:518px" width="16" height="16" viewBox="0 0 16 16"><path d="M1.5 3.5q0-2.5 5-2.5t5 2.5v9q0 2.5-5 2.5t-5-2.5z" fill="#f2dc1a" stroke="#333" stroke-width="0.9"/><path d="M2.5 3.8q0 1.6 4 1.6" fill="none" stroke="#b8a000" stroke-width="0.6"/><rect x="2.5" y="5" width="2" height="8" fill="#fff59a" opacity="0.6"/><path d="M9 6h7v10h-7z" fill="#fff" opacity="0"/><circle cx="12" cy="10" r="3.5" fill="#fff"/><path d="M12 6.8v6.4M9.2 8.4l5.6 3.2M9.2 11.6l5.6-3.2" stroke="#222" stroke-width="0.9"/></svg>
<div class="itxt" style="left:236px;top:518px">DB Begin Transaction</div>
<svg class="ic" style="left:218px;top:535px" width="16" height="16" viewBox="0 0 16 16"><path d="M1.5 3.5q0-2.5 5-2.5t5 2.5v9q0 2.5-5 2.5t-5-2.5z" fill="#f2dc1a" stroke="#333" stroke-width="0.9"/><path d="M2.5 3.8q0 1.6 4 1.6" fill="none" stroke="#b8a000" stroke-width="0.6"/><rect x="2.5" y="5" width="2" height="8" fill="#fff59a" opacity="0.6"/><path d="M9 6h7v10h-7z" fill="#fff" opacity="0"/><path d="M7.5 11.5L10 14L15.5 8" fill="none" stroke="#fff" stroke-width="3"/><path d="M7.5 11.5L10 14L15.5 8" fill="none" stroke="#18b018" stroke-width="1.7"/></svg>
<div class="itxt" style="left:236px;top:535px">DB Commit Transaction</div>
<svg class="ic" style="left:218px;top:552px" width="16" height="16" viewBox="0 0 16 16"><path d="M1.5 3.5q0-2.5 5-2.5t5 2.5v9q0 2.5-5 2.5t-5-2.5z" fill="#f2dc1a" stroke="#333" stroke-width="0.9"/><path d="M2.5 3.8q0 1.6 4 1.6" fill="none" stroke="#b8a000" stroke-width="0.6"/><rect x="2.5" y="5" width="2" height="8" fill="#fff59a" opacity="0.6"/><path d="M9 6h7v10h-7z" fill="#fff" opacity="0"/><path d="M9.5 7h2.5q2.5 0 2.5 2.5v4.5h-5" fill="#fff" stroke="#222" stroke-width="0.9"/><path d="M11 5.5L9 7L11 8.5" fill="none" stroke="#222" stroke-width="0.9"/></svg>
<div class="itxt" style="left:236px;top:552px">DB Rollback Transaction</div>
<svg class="ic" style="left:218px;top:569px" width="16" height="16" viewBox="0 0 16 16"><path d="M1.5 3.5q0-2.5 5-2.5t5 2.5v9q0 2.5-5 2.5t-5-2.5z" fill="#f2dc1a" stroke="#333" stroke-width="0.9"/><path d="M2.5 3.8q0 1.6 4 1.6" fill="none" stroke="#b8a000" stroke-width="0.6"/><rect x="2.5" y="5" width="2" height="8" fill="#fff59a" opacity="0.6"/><path d="M9 6h7v10h-7z" fill="#fff" opacity="0"/><circle cx="12" cy="12" r="3.6" fill="#fff" stroke="#444" stroke-width="1" stroke-dasharray="1.2 0.8"/><circle cx="12" cy="12" r="1.3" fill="#666"/></svg>
<div class="itxt" style="left:236px;top:569px">DB Execute</div>
<svg class="ic" style="left:218px;top:586px" width="16" height="16" viewBox="0 0 16 16"><path d="M1.5 3.5q0-2.5 5-2.5t5 2.5v9q0 2.5-5 2.5t-5-2.5z" fill="#f2dc1a" stroke="#333" stroke-width="0.9"/><path d="M2.5 3.8q0 1.6 4 1.6" fill="none" stroke="#b8a000" stroke-width="0.6"/><rect x="2.5" y="5" width="2" height="8" fill="#fff59a" opacity="0.6"/><path d="M9 6h7v10h-7z" fill="#fff" opacity="0"/><circle cx="12" cy="12" r="3.6" fill="#fff" stroke="#444" stroke-width="1" stroke-dasharray="1.2 0.8"/><circle cx="12" cy="12" r="1.3" fill="#666"/></svg>
<div class="itxt" style="left:236px;top:586px">DB Bulk Insert Into</div>
<svg class="ic" style="left:218px;top:603px" width="16" height="16" viewBox="0 0 16 16"><path d="M1.5 3.5q0-2.5 5-2.5t5 2.5v9q0 2.5-5 2.5t-5-2.5z" fill="#f2dc1a" stroke="#333" stroke-width="0.9"/><path d="M2.5 3.8q0 1.6 4 1.6" fill="none" stroke="#b8a000" stroke-width="0.6"/><rect x="2.5" y="5" width="2" height="8" fill="#fff59a" opacity="0.6"/><path d="M9 6h7v10h-7z" fill="#fff" opacity="0"/><rect x="9" y="6" width="7" height="10" fill="#fff"/><rect x="11" y="6.5" width="2.2" height="2.2" fill="none" stroke="#222" stroke-width="0.8"/><rect x="9.3" y="12.5" width="2.2" height="2.2" fill="none" stroke="#222" stroke-width="0.8"/><rect x="13" y="12.5" width="2.2" height="2.2" fill="none" stroke="#222" stroke-width="0.8"/><path d="M12.1 8.8v2h-1.7v1.7M12.1 10.8h2v1.7" fill="none" stroke="#222" stroke-width="0.8"/></svg>
<div class="itxt" style="left:236px;top:603px">DB Read Structure</div>
<svg class="ic" style="left:218px;top:620px" width="16" height="16" viewBox="0 0 16 16"><path d="M1.5 3.5q0-2.5 5-2.5t5 2.5v9q0 2.5-5 2.5t-5-2.5z" fill="#f2dc1a" stroke="#333" stroke-width="0.9"/><path d="M2.5 3.8q0 1.6 4 1.6" fill="none" stroke="#b8a000" stroke-width="0.6"/><rect x="2.5" y="5" width="2" height="8" fill="#fff59a" opacity="0.6"/><path d="M9 6h7v10h-7z" fill="#fff" opacity="0"/><path d="M12 6.5L15.8 10.5H13.5V15.5H10.5V10.5H8.2Z" fill="#18b83a" stroke="#fff" stroke-width="0.6"/></svg>
<div class="itxt" style="left:236px;top:620px">Backup/Restore SQLite DB</div>
<svg class="ic" style="left:218px;top:637px" width="16" height="16" viewBox="0 0 16 16"><g transform="translate(-0.5,-0.5)"><path d="M1.5 3.5q0-2.5 5-2.5t5 2.5v9q0 2.5-5 2.5t-5-2.5z" fill="#f2dc1a" stroke="#333" stroke-width="0.9"/><path d="M2.5 3.8q0 1.6 4 1.6" fill="none" stroke="#b8a000" stroke-width="0.6"/><rect x="2.5" y="5" width="2" height="8" fill="#fff59a" opacity="0.6"/></g><rect x="8" y="10" width="8" height="6" fill="#fff"/><path d="M9 11.5h6M13.5 10l1.5 1.5M9 14h6M10.5 12.5L9 14" fill="none" stroke="#222" stroke-width="0.9"/></svg>
<div class="itxt" style="left:236px;top:637px">Switch DB</div>
<div class="hdr" style="left:416px;top:64px"></div>
<svg class="ic" style="left:421px;top:71px" width="9" height="9" viewBox="0 0 9 9"><rect x="0.5" y="0.5" width="8" height="8" rx="1.6" fill="#fff" stroke="#1a1a1a"/><path d="M2 4.5h5" stroke="#1a1a1a"/></svg>
<div class="htxt" style="left:435px;top:69px">Update Data</div>
<svg class="ic" style="left:418px;top:90px" width="16" height="16" viewBox="0 0 16 16"><rect x="7.5" y="1.5" width="6.3" height="4" rx="2.0" fill="#d41a1a" stroke="#6a0000" stroke-width="0.7"/><rect x="8.7" y="2.3" width="3.9" height="1.3333333333333333" rx="0.6" fill="#f8a0a0" opacity="0.8"/><path d="M8.5 7v6h5M8.5 10h5" fill="none" stroke="#222" stroke-width="1"/><path d="M0.3 12h5.5M3.8 10.3L5.8 12L3.8 13.7" fill="none" stroke="#222" stroke-width="0.9"/></svg>
<div class="itxt" style="left:436px;top:90px">Append Node(s)</div>
<svg class="ic" style="left:418px;top:107px" width="16" height="16" viewBox="0 0 16 16"><rect x="1.8" y="2.5" width="7" height="5.5" rx="2.75" fill="#d41a1a" stroke="#6a0000" stroke-width="0.7"/><rect x="3.0" y="3.3" width="4.6" height="1.8333333333333333" rx="0.6" fill="#f8a0a0" opacity="0.8"/><path d="M7.5 6.8L13.5 12.8M13.5 6.8L7.5 12.8" stroke="#e00" stroke-width="2"/></svg>
<div class="itxt" style="left:436px;top:107px">Delete Node(s)</div>
<svg class="ic" style="left:418px;top:124px" width="16" height="16" viewBox="0 0 16 16"><rect x="7.5" y="2" width="6.3" height="4" rx="2.0" fill="#d41a1a" stroke="#6a0000" stroke-width="0.7"/><rect x="8.7" y="2.8" width="3.9" height="1.3333333333333333" rx="0.6" fill="#f8a0a0" opacity="0.8"/><rect x="7.5" y="9" width="6.3" height="4.5" rx="2.25" fill="#d41a1a" stroke="#6a0000" stroke-width="0.7"/><rect x="8.7" y="9.8" width="3.9" height="1.5" rx="0.6" fill="#f8a0a0" opacity="0.8"/><path d="M0.3 7.5h5.5M3.8 5.8L5.8 7.5L3.8 9.2" fill="none" stroke="#222" stroke-width="0.9"/></svg>
<div class="itxt" style="left:436px;top:124px">Insert Node(s)</div>
<svg class="ic" style="left:418px;top:141px" width="16" height="16" viewBox="0 0 16 16"><path d="M0.5 0.5L6.5 6.5M6.5 0.5L0.5 6.5" stroke="#e00" stroke-width="1.8"/><rect x="7.5" y="0.8" width="6.5" height="4.2" rx="2.1" fill="#d41a1a" stroke="#6a0000" stroke-width="0.7"/><rect x="8.7" y="1.6" width="4.1" height="1.4000000000000001" rx="0.6" fill="#f8a0a0" opacity="0.8"/><path d="M8.5 8v6h5M8.5 11h5" fill="none" stroke="#222" stroke-width="1"/><path d="M0.3 12.5h5.5M3.8 10.8L5.8 12.5L3.8 14.2" fill="none" stroke="#222" stroke-width="0.9"/></svg>
<div class="itxt" style="left:436px;top:141px">Replace Node(s)</div>
<svg class="ic" style="left:418px;top:158px" width="16" height="16" viewBox="0 0 16 16"><rect x="7.5" y="4.2" width="7.5" height="6.5" rx="3.25" fill="#d41a1a" stroke="#6a0000" stroke-width="0.7"/><rect x="8.7" y="5.0" width="5.1" height="2.1666666666666665" rx="0.6" fill="#f8a0a0" opacity="0.8"/><path d="M0.3 7.3h5.5M3.8 5.6L5.8 7.3L3.8 9.0" fill="none" stroke="#222" stroke-width="0.9"/></svg>
<div class="itxt" style="left:436px;top:158px">Update Node(s)</div>
<div class="hdr" style="left:416px;top:175px"></div>
<svg class="ic" style="left:421px;top:182px" width="9" height="9" viewBox="0 0 9 9"><rect x="0.5" y="0.5" width="8" height="8" rx="1.6" fill="#fff" stroke="#1a1a1a"/><path d="M2 4.5h5" stroke="#1a1a1a"/></svg>
<div class="htxt" style="left:435px;top:180px">If, Loop, Let, Try/Catch, Throw</div>
<svg class="ic" style="left:418px;top:201px" width="16" height="16" viewBox="0 0 16 16"><path d="M4.8 5.6Q4.8 2.6 8.1 2.6Q11.4 2.6 11.4 5.3Q11.4 6.9 9.6 8Q8.2 8.9 8.2 10.6" fill="none" stroke="#1f7fd4" stroke-width="2.2"/><rect x="7" y="11.8" width="2.4" height="2.2" fill="#1f7fd4"/></svg>
<div class="itxt" style="left:436px;top:201px">If-Then</div>
<svg class="ic" style="left:418px;top:218px" width="16" height="16" viewBox="0 0 16 16"><path d="M4.8 5.6Q4.8 2.6 8.1 2.6Q11.4 2.6 11.4 5.3Q11.4 6.9 9.6 8Q8.2 8.9 8.2 10.6" fill="none" stroke="#1f7fd4" stroke-width="2.2"/><rect x="7" y="11.8" width="2.4" height="2.2" fill="#1f7fd4"/></svg>
<div class="itxt" style="left:436px;top:218px">If-Then-Else</div>
<svg class="ic" style="left:418px;top:235px" width="16" height="16" viewBox="0 0 16 16"><path d="M3.5 3.5Q0.5 8.5 3.5 13.5M12.5 3.5Q15.5 8.5 12.5 13.5" fill="none" stroke="#333" stroke-width="1.2"/><rect x="4.8" y="8.3" width="1.2" height="1.2" fill="#333"/><rect x="7.4" y="8.3" width="1.2" height="1.2" fill="#333"/><rect x="10" y="8.3" width="1.2" height="1.2" fill="#333"/></svg>
<div class="itxt" style="left:436px;top:235px">Switch</div>
<svg class="ic" style="left:418px;top:252px" width="16" height="16" viewBox="0 0 16 16"><path d="M6.5 4.5L10.5 1.2" stroke="#137a2a" stroke-width="1.6"/><path d="M7.5 0.5h3.5v3.5" fill="none" stroke="#137a2a" stroke-width="1.4"/><path d="M4.5 8h7M9 5.2L12 8L9 10.8" fill="none" stroke="#137a2a" stroke-width="1.8"/><path d="M6.5 11.5L10.5 14.8" stroke="#137a2a" stroke-width="1.6"/><path d="M7.5 15.5h3.5V12" fill="none" stroke="#137a2a" stroke-width="1.4"/><path d="M6.5 4.5L4.5 8L6.5 11.5" fill="none" stroke="#137a2a" stroke-width="1.4"/></svg>
<div class="itxt" style="left:436px;top:252px">Case</div>
<svg class="ic" style="left:418px;top:269px" width="16" height="16" viewBox="0 0 16 16"><path d="M4 5Q5.5 2.5 8.5 2.5Q13 2.5 13 8Q13 13.5 8 13.5Q4.5 13.5 3.2 10.5" fill="none" stroke="#1f7fd4" stroke-width="2.4"/><path d="M1 1.5L2 7.5L7.5 6Z" fill="#1f7fd4"/></svg>
<div class="itxt" style="left:436px;top:269px">Loop</div>
<svg class="ic" style="left:418px;top:286px" width="16" height="16" viewBox="0 0 16 16"><g transform="translate(-1,-1) scale(0.9)"><path d="M4 5Q5.5 2.5 8.5 2.5Q13 2.5 13 8Q13 13.5 8 13.5Q4.5 13.5 3.2 10.5" fill="none" stroke="#1f7fd4" stroke-width="2.4"/><path d="M1 1.5L2 7.5L7.5 6Z" fill="#1f7fd4"/></g><path d="M9.8 10L15 15.2M15 10L9.8 15.2" stroke="#e00" stroke-width="1.9"/></svg>
<div class="itxt" style="left:436px;top:286px">Break Loop</div>
<svg class="ic" style="left:418px;top:303px" width="16" height="16" viewBox="0 0 16 16"><circle cx="3" cy="5.5" r="1.5" fill="#1f7fd4"/><circle cx="3" cy="10.5" r="1.5" fill="#1f7fd4"/><path d="M6.5 5.5h8M6.5 10.5h8" stroke="#1f7fd4" stroke-width="2"/></svg>
<div class="itxt" style="left:436px;top:303px">Let</div>
<svg class="ic" style="left:418px;top:320px" width="16" height="16" viewBox="0 0 16 16"><circle cx="3" cy="5.5" r="1.5" fill="#1f7fd4"/><circle cx="3" cy="10.5" r="1.5" fill="#1f7fd4"/><path d="M6.5 5.5h8M6.5 10.5h8" stroke="#1f7fd4" stroke-width="2"/></svg>
<div class="itxt" style="left:436px;top:320px">Update Variable</div>
<svg class="ic" style="left:418px;top:337px" width="16" height="16" viewBox="0 0 16 16"><rect x="0.5" y="0.5" width="12" height="10.5" fill="#fff" stroke="#444" stroke-width="1"/><rect x="0.5" y="0.5" width="12" height="2.8" fill="#4a90f0"/><path d="M8.2 5.2h4.6l2.7 2.7v4.6l-2.7 2.7H8.2l-2.7-2.7V7.9z" fill="#e80808" stroke="#fff" stroke-width="0.6"/><path d="M8.4 8.2L12.6 12.4M12.6 8.2L8.4 12.4" stroke="#fff" stroke-width="1.5"/></svg>
<div class="itxt" style="left:436px;top:337px">Throw</div>
<svg class="ic" style="left:418px;top:354px" width="16" height="16" viewBox="0 0 16 16"><path d="M3.8 2.3Q2 2.3 2 4.2V6Q2 7.5 0.5 7.5Q2 7.5 2 9V10.9Q2 12.8 3.8 12.8M4.9 2.3Q6.7 2.3 6.7 4.2V6Q6.7 7.5 8.2 7.5Q6.7 7.5 6.7 9V10.9Q6.7 12.8 4.9 12.8" fill="none" stroke="#1a78c8" stroke-width="1.7"/><path d="M14.8 2.3Q11 7.5 14.8 12.8" fill="none" stroke="#1a78c8" stroke-width="1.9"/></svg>
<div class="itxt" style="left:436px;top:354px">Try/Catch Exceptions</div>
<svg class="ic" style="left:418px;top:371px" width="16" height="16" viewBox="0 0 16 16"><path d="M3.8 2.3Q2 2.3 2 4.2V6Q2 7.5 0.5 7.5Q2 7.5 2 9V10.9Q2 12.8 3.8 12.8M4.9 2.3Q6.7 2.3 6.7 4.2V6Q6.7 7.5 8.2 7.5Q6.7 7.5 6.7 9V10.9Q6.7 12.8 4.9 12.8" fill="none" stroke="#1a78c8" stroke-width="1.7"/><path d="M14.8 2.3Q11.5 6 12.5 11" fill="none" stroke="#1a78c8" stroke-width="1.9"/><circle cx="12.6" cy="13" r="3" fill="#e80808"/><rect x="10.9" y="12.3" width="3.4" height="1.4" fill="#fff"/></svg>
<div class="itxt" style="left:436px;top:371px">Try/Catch Server Connection</div>
<svg class="ic" style="left:418px;top:388px" width="16" height="16" viewBox="0 0 16 16"><path d="M1 8L6.5 3.5V6.3H14.5V9.7H6.5V12.5Z" fill="#1f7fd4"/></svg>
<div class="itxt" style="left:436px;top:388px">Return</div>
<div class="hdr" style="left:416px;top:405px"></div>
<svg class="ic" style="left:421px;top:412px" width="9" height="9" viewBox="0 0 9 9"><rect x="0.5" y="0.5" width="8" height="8" rx="1.6" fill="#fff" stroke="#1a1a1a"/><path d="M2 4.5h5" stroke="#1a1a1a"/></svg>
<div class="htxt" style="left:435px;top:410px">Execution</div>
<svg class="ic" style="left:418px;top:431px" width="16" height="16" viewBox="0 0 16 16"><path d="M5 0.5h6l4.5 4.5v6l-4.5 4.5h-6l-4.5-4.5v-6z" fill="#f01010" stroke="#d00000" stroke-width="0.8"/><g fill="#fff"><rect x="4.3" y="4" width="1.9" height="6.5" rx="0.9"/><rect x="6.4" y="2.6" width="1.9" height="6.5" rx="0.9"/><rect x="8.5" y="2.8" width="1.9" height="6.5" rx="0.9"/><rect x="10.5" y="4.2" width="1.8" height="6.5" rx="0.9"/><path d="M4.3 8h8v2.5q0 3.2-3.5 3.2h-1q-2.5 0-3.5-2z"/><path d="M5 11.8L2.6 9q0.4-1 1.4-0.5L5.5 10z"/></g></svg>
<div class="itxt" style="left:436px;top:431px">Cancel Action Execution</div>
<svg class="ic" style="left:418px;top:448px" width="16" height="16" viewBox="0 0 16 16"><rect x="1" y="1" width="9" height="5.5" rx="2.75" fill="#b83030" stroke="#6a0000" stroke-width="0.7"/><rect x="2.2" y="1.8" width="6.6" height="1.8333333333333333" rx="0.6" fill="#f8a0a0" opacity="0.8"/><g transform="translate(4.5,3.5)"><rect x="0" y="0" width="9" height="5.5" rx="2.75" fill="#b83030" stroke="#6a0000" stroke-width="0.7"/><rect x="1.2" y="0.8" width="6.6" height="1.8333333333333333" rx="0.6" fill="#f8a0a0" opacity="0.8"/></g><path d="M3.5 9.5v4.5h5.5M7.5 12.5L9 14L7.5 15.5" fill="none" stroke="#222" stroke-width="0.9"/><text x="11" y="15.8" font-size="6" font-weight="bold" font-family="Liberation Sans" fill="#222">1</text></svg>
<div class="itxt" style="left:436px;top:448px">Execute At Once</div>
<svg class="ic" style="left:418px;top:465px" width="16" height="16" viewBox="0 0 16 16"><path d="M1 6h13M10.5 2.8L14 6" fill="none" stroke="#18b018" stroke-width="1.8"/><path d="M15 10H2M5.5 13.2L2 10" fill="none" stroke="#b01818" stroke-width="1.8"/></svg>
<div class="itxt" style="left:436px;top:465px">Execute On</div>
<svg class="ic" style="left:418px;top:482px" width="16" height="16" viewBox="0 0 16 16"><path d="M8 0.5L15.5 8L8 15.5L0.5 8Z" fill="#f0a020" stroke="#d88a10" stroke-width="0.6"/><path d="M8 3.5v5M6 6.5L8 8.5L10 6.5" fill="none" stroke="#fff" stroke-width="1.3"/><rect x="5" y="10" width="6" height="1.6" fill="#c01010"/></svg>
<div class="itxt" style="left:436px;top:482px">Solution Execution</div>
<svg class="ic" style="left:418px;top:499px" width="16" height="16" viewBox="0 0 16 16"><path d="M5 0.5h6l4.5 4.5v6l-4.5 4.5h-6l-4.5-4.5v-6z" fill="#7a7a7a" stroke="#666" stroke-width="0.8"/><g fill="#fff"><rect x="4.3" y="4" width="1.9" height="6.5" rx="0.9"/><rect x="6.4" y="2.6" width="1.9" height="6.5" rx="0.9"/><rect x="8.5" y="2.8" width="1.9" height="6.5" rx="0.9"/><rect x="10.5" y="4.2" width="1.8" height="6.5" rx="0.9"/><path d="M4.3 8h8v2.5q0 3.2-3.5 3.2h-1q-2.5 0-3.5-2z"/><path d="M5 11.8L2.6 9q0.4-1 1.4-0.5L5.5 10z"/></g></svg>
<div class="itxt" style="left:436px;top:499px">User Cancel Behavior</div>
<svg class="ic" style="left:418px;top:516px" width="16" height="16" viewBox="0 0 16 16"><path d="M5.3 8.2V6Q5.3 3 7.9 3T10.5 6V8.2" fill="none" stroke="#222" stroke-width="1.3"/><rect x="3.6" y="8" width="8.6" height="6.2" fill="#f4e41c" stroke="#222" stroke-width="1"/><rect x="7.2" y="10.3" width="1.4" height="1.8" fill="#222"/></svg>
<div class="itxt" style="left:436px;top:516px">Lock/Unlock Clients</div>
<div class="hdr" style="left:416px;top:533px"></div>
<svg class="ic" style="left:421px;top:540px" width="9" height="9" viewBox="0 0 9 9"><rect x="0.5" y="0.5" width="8" height="8" rx="1.6" fill="#fff" stroke="#1a1a1a"/><path d="M2 4.5h5" stroke="#1a1a1a"/></svg>
<div class="htxt" style="left:435px;top:538px">Miscellaneous</div>
<svg class="ic" style="left:418px;top:559px" width="16" height="16" viewBox="0 0 16 16"><path d="M4 2Q1 8 4 14" fill="none" stroke="#777" stroke-width="1.7"/><rect x="7" y="5.5" width="2" height="2" fill="#777"/><rect x="7" y="10" width="2" height="2" fill="#777"/></svg>
<div class="itxt" style="left:436px;top:559px">Comment</div>
<svg class="ic" style="left:418px;top:576px" width="16" height="16" viewBox="0 0 16 16"><path d="M1.2 1.8h5.3l2.2 2.2v6.3H1.2z" fill="#fff" stroke="#111" stroke-width="1.1"/><path d="M2.6 4h2.6M2.6 6h4.5M2.6 8h4.5" stroke="#111" stroke-width="1"/><path d="M7.1 4.8h5.6l2.8 2.8v6.6h-8.4z" fill="#fff" stroke="#0c2a9a" stroke-width="1.2"/><path d="M8.6 8.8h5.4M8.6 11h5.4" stroke="#0c2a9a" stroke-width="1.1"/></svg>
<div class="itxt" style="left:436px;top:576px">Copy/Paste Clipboard</div>
<svg class="ic" style="left:418px;top:593px" width="16" height="16" viewBox="0 0 16 16"><rect x="1.5" y="1" width="13" height="8.5" rx="1.2" fill="#dde0f4" stroke="#333" stroke-width="0.9"/><path d="M2 1.5L8 6.5L14 1.5M2 9L6 5.5M14 9L10 5.5" fill="none" stroke="#555" stroke-width="0.7"/><path d="M14 12.5H5M7.5 10L4.5 12.5L7.5 15" fill="none" stroke="#18a018" stroke-width="1.8"/></svg>
<div class="itxt" style="left:436px;top:593px">Embedded Message Back</div>
<svg class="ic" style="left:418px;top:610px" width="16" height="16" viewBox="0 0 16 16"><path d="M1.5 3.0h13" stroke="#333" stroke-width="1" stroke-dasharray="3 1"/><path d="M1.5 5.3h13" stroke="#333" stroke-width="1" stroke-dasharray="2 1 4 1"/><path d="M1.5 7.6h13" stroke="#333" stroke-width="1" stroke-dasharray="4 1"/><path d="M1.5 9.899999999999999h13" stroke="#333" stroke-width="1" stroke-dasharray="1 1 3 1"/><path d="M1.5 12.2h13" stroke="#333" stroke-width="1" stroke-dasharray="3 1 2 1"/><path d="M1.5 14.5h13" stroke="#333" stroke-width="1" stroke-dasharray="4 1 1 1"/></svg>
<div class="itxt" style="left:436px;top:610px">Log Message</div>
<svg class="ic" style="left:418px;top:627px" width="16" height="16" viewBox="0 0 16 16"><rect x="0.5" y="5.5" width="15" height="5" fill="#a8d4f0" stroke="#333" stroke-width="0.9"/><path d="M3 5.5v2M5.5 5.5v2M8 5.5v2M10.5 5.5v2M13 5.5v2" stroke="#333" stroke-width="0.7"/></svg>
<div class="itxt" style="left:436px;top:627px">Measure Controls</div>
<svg class="ic" style="left:418px;top:644px" width="16" height="16" viewBox="0 0 16 16"><circle cx="8" cy="5" r="4" fill="#14b050" stroke="#222" stroke-width="0.7"/><path d="M7.5 1.5q2 1.5 0 3.5q-1 1 0.8 3.5" fill="none" stroke="#1a6ee0" stroke-width="1.3"/><text x="8" y="15.5" font-size="5.4" font-weight="bold" font-family="Liberation Sans" text-anchor="middle" fill="#222" letter-spacing="0.2">LANG</text></svg>
<div class="itxt" style="left:436px;top:644px">Set Language</div>
<svg class="ic" style="left:418px;top:661px" width="16" height="16" viewBox="0 0 16 16"><rect x="1.5" y="1.5" width="13" height="14" fill="#fff" stroke="#333" stroke-width="1"/><path d="M1.5 15.5L14.5 1.5V1.5H1.5Z" fill="#333"/></svg>
<div class="itxt" style="left:436px;top:661px">Set Theme</div>
<svg width="0" height="0" style="left:0;top:0"><defs><linearGradient id="boltg" x1="0" y1="0" x2="1" y2="1"><stop offset="0" stop-color="#fff8d8"/><stop offset="0.45" stop-color="#ffcf5a"/><stop offset="1" stop-color="#f09000"/></linearGradient></defs></svg>
<div style="left:620px;top:57px;width:423px;height:620px;background:#f9f9f9;border-left:1px solid #e9e9e9;border-right:1px solid #e9e9e9"></div>
<div style="left:620px;top:35px;width:107px;height:23px;background:#f9f9f9;border:1px solid #e6e6e6;border-bottom:none"></div>
<div class="t" style="left:629px;top:38px;color:#000;letter-spacing:0px;">OnButtonClicked</div>
<div style="left:630px;top:69px;width:405px;height:24px;background:#efefef"></div>
<div style="left:680px;top:70px;width:1px;height:22px;background:#cfcfcf"></div>
<div style="left:754px;top:70px;width:1px;height:22px;background:#cfcfcf"></div>
<div style="left:819px;top:70px;width:1px;height:22px;background:#cfcfcf"></div>
<div style="left:871px;top:70px;width:1px;height:22px;background:#cfcfcf"></div>
<div style="left:901px;top:70px;width:1px;height:22px;background:#cfcfcf"></div>
<div style="left:931px;top:70px;width:1px;height:22px;background:#cfcfcf"></div>
<svg class="ic" style="left:636px;top:75px" width="14" height="11" viewBox="0 0 14 11"><path d="M3 4.5 Q7 0.8 11 3.5 Q13 6 11 9.5" fill="none" stroke="#a9c0ea" stroke-width="1.6"/><path d="M0.8 1.5L1.2 7.5L6.5 6.2Z" fill="#a9c0ea"/></svg>
<svg class="ic" style="left:658px;top:75px" width="14" height="11" viewBox="0 0 14 11"><path d="M11 4.5 Q7 0.8 3 3.5 Q1 6 3 9.5" fill="none" stroke="#a9c0ea" stroke-width="1.6"/><path d="M13.2 1.5L12.8 7.5L7.5 6.2Z" fill="#a9c0ea"/></svg>
<svg class="ic" style="left:689px;top:73px" width="12" height="15" viewBox="0 0 12 15"><path d="M3.2 1L7.5 10M8.8 1L4.5 10" stroke="#111" stroke-width="1.1"/><circle cx="3.3" cy="12" r="2.1" fill="none" stroke="#1a3cb0" stroke-width="1.3"/><circle cx="8.7" cy="12" r="2.1" fill="none" stroke="#1a3cb0" stroke-width="1.3"/></svg>
<svg class="ic" style="left:709px;top:74px" width="16" height="14" viewBox="0 0 16 14"><path d="M2 1.5L14 12.5M14 1.5L2 12.5" stroke="#8e1010" stroke-width="2.6" stroke-linecap="round"/></svg>
<svg class="ic" style="left:731px;top:74px" width="17" height="14" viewBox="0 0 17 14"><path d="M1.2 0.8h5.3l2.2 2.2v6.3H1.2z" fill="#fff" stroke="#111" stroke-width="1.1"/><path d="M2.6 3h2.6M2.6 5h4.5M2.6 7h4.5" stroke="#111" stroke-width="1"/><path d="M7.1 3.8h5.6l2.8 2.8v6h-8.4z" fill="#fff" stroke="#0c2a9a" stroke-width="1.2"/><path d="M8.6 7.8h5.4M8.6 10h5.4" stroke="#0c2a9a" stroke-width="1.1"/></svg>
<svg class="ic" style="left:761px;top:73px" width="17" height="16" viewBox="0 0 17 16"><rect x="1.2" y="1.8" width="13.6" height="11.2" rx="1.8" fill="#d6cfb8" stroke="#b5ad96" stroke-width="1"/><path d="M5 2.5h6v-1.5h-6z" fill="#efeadc" stroke="#aaa38a" stroke-width="0.9"/><path d="M7.3 6.6h5.4l2.6 2.6v6.3h-8z" fill="#fff" stroke="#a9b5da" stroke-width="1.1"/><path d="M8.8 10.5h5M8.8 12.6h5" stroke="#a0a8c0" stroke-width="0.9"/></svg>
<svg class="ic" style="left:786px;top:74px" width="13" height="13" viewBox="0 0 13 13"><path d="M6.5 0.3v12.4M0.3 6.5h12.4" stroke="#a8dca8" stroke-width="2.8"/></svg>
<svg class="ic" style="left:806px;top:79px" width="7" height="4" viewBox="0 0 7 4"><path d="M0.5 0.5h6l-3 3z" fill="#808080"/></svg>
<div style="left:823px;top:70px;width:22px;height:22px;background:#d3e5f5;border:1px solid #0a78d8;box-shadow:inset 0 0 0 1px #f4f9ff"></div>
<div style="left:845px;top:70px;width:22px;height:22px;background:#d3e5f5;border:1px solid #0a78d8;box-shadow:inset 0 0 0 1px #f4f9ff,-1px 0 0 #0a78d8"></div>
<svg class="ic" style="left:827px;top:74px" width="14" height="14" viewBox="0 0 14 14"><circle cx="7" cy="7" r="6" fill="#55b2f2" stroke="#1a80dc" stroke-width="1.1"/><circle cx="7" cy="3.8" r="1.2" fill="#fff"/><rect x="5.9" y="5.8" width="2.2" height="5" fill="#fff"/></svg>
<svg class="ic" style="left:848px;top:74px" width="16" height="14" viewBox="0 0 16 14"><path d="M8 0.8L15.2 13.3H0.8Z" fill="#f5b53c" stroke="#c77a00" stroke-width="0.9" stroke-linejoin="round"/><rect x="7.1" y="4.5" width="1.8" height="5" fill="#222"/><rect x="7.1" y="10.5" width="1.8" height="1.6" fill="#222"/></svg>
<svg class="ic" style="left:877px;top:73px" width="18" height="17" viewBox="0 0 18 17"><path d="M3.8 2.3Q1.4 7.5 3.8 12.8" fill="none" stroke="#666" stroke-width="1.5"/><rect x="6" y="4.3" width="2" height="2" fill="#444"/><rect x="6" y="9.3" width="2" height="2" fill="#444"/><path d="M13.5 0.3L16.2 3V5.5H10.8V3Z" fill="#333"/><rect x="9.8" y="5.2" width="7.4" height="1.3" fill="#222"/><rect x="11.3" y="6.3" width="4.4" height="5.6" fill="#fff" stroke="#333" stroke-width="1"/><path d="M10.8 11.5H16.2V13.3L13.5 16.2L10.8 13.3Z" fill="#333"/></svg>
<svg class="ic" style="left:907px;top:72px" width="17" height="17" viewBox="0 0 17 17"><circle cx="8.5" cy="8.5" r="7.8" fill="#e83535" stroke="#c42020" stroke-width="0.8"/></svg>
<svg class="ic" style="left:938px;top:74px" width="16" height="14" viewBox="0 0 16 14"><path d="M0.8 7L7 1v3.3h8.2v5.4H7V13Z" fill="#fafafa" stroke="#b8b8b8"/></svg>
<svg class="ic" style="left:960px;top:74px" width="17" height="14" viewBox="0 0 17 14"><path d="M16 7L9.8 1v3.3H1.6v5.4h8.2V13Z" fill="#fafafa" stroke="#b8b8b8"/></svg>
<div style="left:630px;top:93px;width:405px;height:600px;background:#fff;border-top:2px solid #5a5a5a;border-left:1px solid #5a5a5a;border-right:1px solid #5a5a5a"></div>
<div style="left:636px;top:108px;width:1px;height:59px;background:repeating-linear-gradient(#555 0 1px,transparent 1px 2px)"></div>
<div style="left:636px;top:113px;width:398px;height:1px;background:#8a8a8a"></div>
<div style="left:637px;top:124px;width:19px;height:1px;background:repeating-linear-gradient(90deg,#555 0 1px,transparent 1px 2px)"></div>
<div style="left:637px;top:145px;width:19px;height:1px;background:repeating-linear-gradient(90deg,#555 0 1px,transparent 1px 2px)"></div>
<div style="left:637px;top:166px;width:7px;height:1px;background:repeating-linear-gradient(90deg,#555 0 1px,transparent 1px 2px)"></div>
<div style="left:648px;top:171px;width:1px;height:97px;background:repeating-linear-gradient(#555 0 1px,transparent 1px 2px)"></div>
<div style="left:649px;top:204px;width:7px;height:1px;background:repeating-linear-gradient(90deg,#555 0 1px,transparent 1px 2px)"></div>
<div style="left:660px;top:209px;width:1px;height:17px;background:repeating-linear-gradient(#555 0 1px,transparent 1px 2px)"></div>
<div style="left:661px;top:225px;width:7px;height:1px;background:repeating-linear-gradient(90deg,#555 0 1px,transparent 1px 2px)"></div>
<div style="left:649px;top:247px;width:19px;height:1px;background:repeating-linear-gradient(90deg,#555 0 1px,transparent 1px 2px)"></div>
<div style="left:649px;top:268px;width:19px;height:1px;background:repeating-linear-gradient(90deg,#555 0 1px,transparent 1px 2px)"></div>
<svg class="ic" style="left:632px;top:99px" width="9" height="9" viewBox="0 0 9 9"><rect x="0.5" y="0.5" width="8" height="8" fill="#fff" stroke="#000"/><path d="M2 4.5h5" stroke="#000"/></svg>
<svg class="ic" style="left:648px;top:96px" width="11" height="14" viewBox="0 0 11 14"><path d="M3.3 0.5L10.2 0.5L6.4 4.9L10 5.8L1.2 13.8L2.6 7.6L0.4 6.6Z" fill="url(#boltg)" stroke="#9a5800" stroke-width="0.9" stroke-linejoin="round"/></svg>
<div class="t" style="left:664px;top:95px;color:#444;letter-spacing:-0.2px;">OnButtonClicked 'Add Image'</div>
<svg class="ic" style="left:660px;top:117px" width="11" height="14" viewBox="0 0 11 14"><path d="M3.3 0.5L10.2 0.5L6.4 4.9L10 5.8L1.2 13.8L2.6 7.6L0.4 6.6Z" fill="url(#boltg)" stroke="#9a5800" stroke-width="0.9" stroke-linejoin="round"/></svg>
<div class="t" style="left:676px;top:116px;color:#444;letter-spacing:-0.2px;">On Click</div>
<div style="left:725px;top:119px;width:11px;height:10px;background:#fff;border:1px solid #333"></div>
<div class="t" style="left:740px;top:116px;color:#000;letter-spacing:-0.2px;">On Enter</div>
<div style="left:790px;top:119px;width:11px;height:10px;background:#fff;border:1px solid #333"></div>
<div class="t" style="left:805px;top:116px;color:#000;letter-spacing:-0.2px;">On Escape</div>
<svg class="ic" style="left:660px;top:137px" width="11" height="14" viewBox="0 0 11 14"><path d="M3.3 0.5L10.2 0.5L6.4 4.9L10 5.8L1.2 13.8L2.6 7.6L0.4 6.6Z" fill="url(#boltg)" stroke="#9a5800" stroke-width="0.9" stroke-linejoin="round"/></svg>
<div class="t" style="left:676px;top:137px;color:#444;letter-spacing:-0.2px;">On Long Click</div>
<div style="left:656px;top:158px;width:351px;height:33px;background:#ececf9"></div>
<svg class="ic" style="left:644px;top:162px" width="9" height="9" viewBox="0 0 9 9"><rect x="0.5" y="0.5" width="8" height="8" fill="#fff" stroke="#000"/><path d="M2 4.5h5" stroke="#000"/></svg>
<svg class="ic" style="left:657px;top:159px" width="16" height="13" viewBox="0 0 16 13"><rect x="0" y="0" width="16" height="13" fill="#3fe6f0"/><rect x="0" y="8.5" width="16" height="4.5" fill="#4aa82a"/><circle cx="5" cy="4.5" r="3" fill="#139a13"/><rect x="4.4" y="6" width="1.2" height="4" fill="#7a4a1a"/><circle cx="12" cy="3.5" r="2" fill="#f4f41a"/></svg>
<div class="t" style="left:676px;top:158px;color:#444;letter-spacing:-0.35px;">Let User Choose Image</div>
<div class="t" style="left:802px;top:158px;color:#000;letter-spacing:-0.1px;">Camera</div>
<div style="left:844px;top:160px;width:14px;height:14px;background:#e6e6e6;border:1px solid #f4f4f4;border-right-color:#d8d8d8;border-bottom-color:#d8d8d8"></div><svg class="ic" style="left:847px;top:165px" width="8" height="5" viewBox="0 0 8 5"><path d="M0.5 0.5h7l-3.5 4z" fill="#000"/></svg>
<div class="t" style="right:402px;top:174px;color:#444;letter-spacing:-0.2px">Target Node</div>
<div class="t" style="left:802px;top:174px;color:#000;letter-spacing:-0.45px;">$PERSISTENT/Root/@image-source</div>
<div style="left:990px;top:176px;width:16px;height:15px;background:#ececec;border-left:1px solid #fafafa;border-top:1px solid #fafafa;border-right:1px solid #7a7a7a;border-bottom:1px solid #7a7a7a"></div><svg class="ic" style="left:992px;top:177px" width="12" height="13" viewBox="0 0 12 13"><path d="M3.5 1.2L8.5 6.3M8.5 1.2L3.5 6.3" stroke="#222" stroke-width="0.9"/><text x="6" y="12" font-size="5.2" font-family="Liberation Sans" font-weight="bold" text-anchor="middle" fill="#222">PATH</text></svg>
<svg class="ic" style="left:656px;top:200px" width="9" height="9" viewBox="0 0 9 9"><rect x="0.5" y="0.5" width="8" height="8" fill="#fff" stroke="#000"/><path d="M2 4.5h5" stroke="#000"/></svg>
<svg class="ic" style="left:670px;top:197px" width="14" height="14" viewBox="0 0 14 14"><circle cx="7" cy="7" r="6.6" fill="#19b019" stroke="#0d8a0d" stroke-width="0.6"/><path d="M3.6 7.2L6 9.6L10.6 4.6" fill="none" stroke="#fff" stroke-width="1.8"/></svg>
<div class="t" style="left:688px;top:196px;color:#444;letter-spacing:-0.2px;">On OK</div>
<svg class="ic" style="left:668px;top:221px" width="9" height="9" viewBox="0 0 9 9"><rect x="0.5" y="0.5" width="8" height="8" fill="#fff" stroke="#000"/><path d="M2 4.5h5" stroke="#000"/><path d="M4.5 2v5" stroke="#000"/></svg>
<svg class="ic" style="left:684px;top:218px" width="11" height="14" viewBox="0 0 11 14"><path d="M3.3 0.5L10.2 0.5L6.4 4.9L10 5.8L1.2 13.8L2.6 7.6L0.4 6.6Z" fill="url(#boltg)" stroke="#9a5800" stroke-width="0.9" stroke-linejoin="round"/></svg>
<div class="t" style="left:700px;top:217px;color:#444;letter-spacing:-0.15px;">Execute Action Group</div>
<div class="t" style="left:821px;top:218px;color:#000;letter-spacing:-0.25px;">Limit Image Size</div>
<div style="left:907px;top:218px;width:14px;height:14px;background:#e6e6e6;border:1px solid #f4f4f4;border-right-color:#d8d8d8;border-bottom-color:#d8d8d8"></div><svg class="ic" style="left:910px;top:223px" width="8" height="5" viewBox="0 0 8 5"><path d="M0.5 0.5h7l-3.5 4z" fill="#000"/></svg>
<div style="left:930px;top:218px;width:16px;height:15px;background:#ececec;border-left:1px solid #fafafa;border-top:1px solid #fafafa;border-right:1px solid #7a7a7a;border-bottom:1px solid #7a7a7a"></div>
<svg class="ic" style="left:933px;top:224px" width="10" height="3" viewBox="0 0 10 3"><rect x="0.5" y="0" width="2" height="2.2" fill="#111"/><rect x="4" y="0" width="2" height="2.2" fill="#111"/><rect x="7.5" y="0" width="2" height="2.2" fill="#111"/></svg>
<div style="left:948px;top:218px;width:16px;height:15px;background:#ececec;border-left:1px solid #fafafa;border-top:1px solid #fafafa;border-right:1px solid #7a7a7a;border-bottom:1px solid #7a7a7a"></div><svg class="ic" style="left:950px;top:219px" width="12" height="13" viewBox="0 0 12 13"><path d="M3.5 1.2L8.5 6.3M8.5 1.2L3.5 6.3" stroke="#222" stroke-width="0.9"/><text x="6" y="12" font-size="5.2" font-family="Liberation Sans" font-weight="bold" text-anchor="middle" fill="#222">PATH</text></svg>
<svg class="ic" style="left:669px;top:239px" width="15" height="15" viewBox="0 0 15 15"><circle cx="7.5" cy="7.5" r="7.2" fill="#e00a0a" stroke="#b00000" stroke-width="0.6"/><rect x="3" y="6" width="9" height="3" fill="#fff"/></svg>
<div class="t" style="left:688px;top:239px;color:#444;letter-spacing:-0.2px;">On Cancel</div>
<svg class="ic" style="left:669px;top:261px" width="14" height="13" viewBox="0 0 14 13"><circle cx="7" cy="6.5" r="6.4" fill="#e00a0a" stroke="#b00000" stroke-width="0.6"/><path d="M4.3 3.8L9.7 9.2M9.7 3.8L4.3 9.2" stroke="#fff" stroke-width="1.8"/></svg>
<div class="t" style="left:688px;top:260px;color:#444;letter-spacing:-0.2px;">On Error</div>
<div style="left:1053px;top:37px;width:2px;height:640px;background:#cdcdcd"></div>
<div class="t" style="left:1065px;top:39px;color:#000;letter-spacing:0px;">Action Groups:</div>
<svg class="ic" style="left:1068px;top:61px" width="15" height="15" viewBox="0 0 15 15"><path d="M7.5 1.5v12M1.5 7.5h12" stroke="#fff" stroke-width="4.4"/><path d="M7.5 1.5v12M1.5 7.5h12" stroke="#119a11" stroke-width="2.8"/></svg>
<svg class="ic" style="left:1090px;top:62px" width="16" height="15" viewBox="0 0 16 15"><path d="M2 2L14 13M14 2L2 13" stroke="#d6a6a6" stroke-width="2.4" stroke-linecap="round"/></svg>
<div style="left:1113px;top:58px;width:1px;height:22px;background:#c4c4c4"></div>
<svg class="ic" style="left:1119px;top:61px" width="18" height="16" viewBox="0 0 18 16"><path d="M5.5 0.5h3M7 0.5v14h3M7 3.5h3" fill="none" stroke="#a8a8a8" stroke-width="1.1"/><rect x="10" y="1.6" width="6.5" height="3.5" fill="#fff" stroke="#a8a8a8"/><rect x="10" y="12" width="6.5" height="3.5" fill="#fff" stroke="#a8a8a8"/><path d="M13 6.5v4" stroke="#a8a8a8" stroke-dasharray="1 1"/><path d="M3 5v4M0.5 8.5L3 12L5.5 8.5Z" stroke="#e89a9a" fill="#e89a9a"/></svg>
<svg class="ic" style="left:1141px;top:61px" width="18" height="16" viewBox="0 0 18 16"><path d="M5.5 0.5h3M7 0.5v3h3" fill="none" stroke="#a8a8a8" stroke-width="1.1"/><rect x="10" y="1.6" width="6.5" height="3.5" fill="#fbd89a" stroke="#b8b8b8"/><path d="M7 6v8.5h9.5V6" fill="none" stroke="#b0b0b0" stroke-dasharray="1 1.2"/><path d="M3 12V7M0.5 7.5L3 4L5.5 7.5Z" stroke="#e89a9a" fill="#e89a9a"/></svg>
<div style="left:1063px;top:81px;width:140px;height:600px;background:#fff;border-top:2px solid #5a5a5a;border-left:1px solid #5a5a5a"></div>
<svg class="ic" style="left:1069px;top:84px" width="11" height="14" viewBox="0 0 11 14"><path d="M3.3 0.5L10.2 0.5L6.4 4.9L10 5.8L1.2 13.8L2.6 7.6L0.4 6.6Z" fill="url(#boltg)" stroke="#9a5800" stroke-width="0.9" stroke-linejoin="round"/></svg>
<div class="t" style="left:1085px;top:83px;color:#000;letter-spacing:-0.1px;">Add New Book</div>
<svg class="ic" style="left:1069px;top:101px" width="11" height="14" viewBox="0 0 11 14"><path d="M3.3 0.5L10.2 0.5L6.4 4.9L10 5.8L1.2 13.8L2.6 7.6L0.4 6.6Z" fill="url(#boltg)" stroke="#9a5800" stroke-width="0.9" stroke-linejoin="round"/></svg>
<div class="t" style="left:1085px;top:100px;color:#000;letter-spacing:-0.1px;">Discard Edit</div>
<svg class="ic" style="left:1069px;top:118px" width="11" height="14" viewBox="0 0 11 14"><path d="M3.3 0.5L10.2 0.5L6.4 4.9L10 5.8L1.2 13.8L2.6 7.6L0.4 6.6Z" fill="url(#boltg)" stroke="#9a5800" stroke-width="0.9" stroke-linejoin="round"/></svg>
<div class="t" style="left:1085px;top:117px;color:#000;letter-spacing:-0.1px;">Edit Existing Book</div>
<svg class="ic" style="left:1069px;top:135px" width="11" height="14" viewBox="0 0 11 14"><path d="M3.3 0.5L10.2 0.5L6.4 4.9L10 5.8L1.2 13.8L2.6 7.6L0.4 6.6Z" fill="url(#boltg)" stroke="#9a5800" stroke-width="0.9" stroke-linejoin="round"/></svg>
<div class="t" style="left:1085px;top:134px;color:#000;letter-spacing:-0.1px;">Limit Image Size</div>
<svg class="ic" style="left:1069px;top:152px" width="11" height="14" viewBox="0 0 11 14"><path d="M3.3 0.5L10.2 0.5L6.4 4.9L10 5.8L1.2 13.8L2.6 7.6L0.4 6.6Z" fill="url(#boltg)" stroke="#9a5800" stroke-width="0.9" stroke-linejoin="round"/></svg>
<div class="t" style="left:1085px;top:151px;color:#000;letter-spacing:-0.1px;">Perform DB Search</div>
</body></html>
